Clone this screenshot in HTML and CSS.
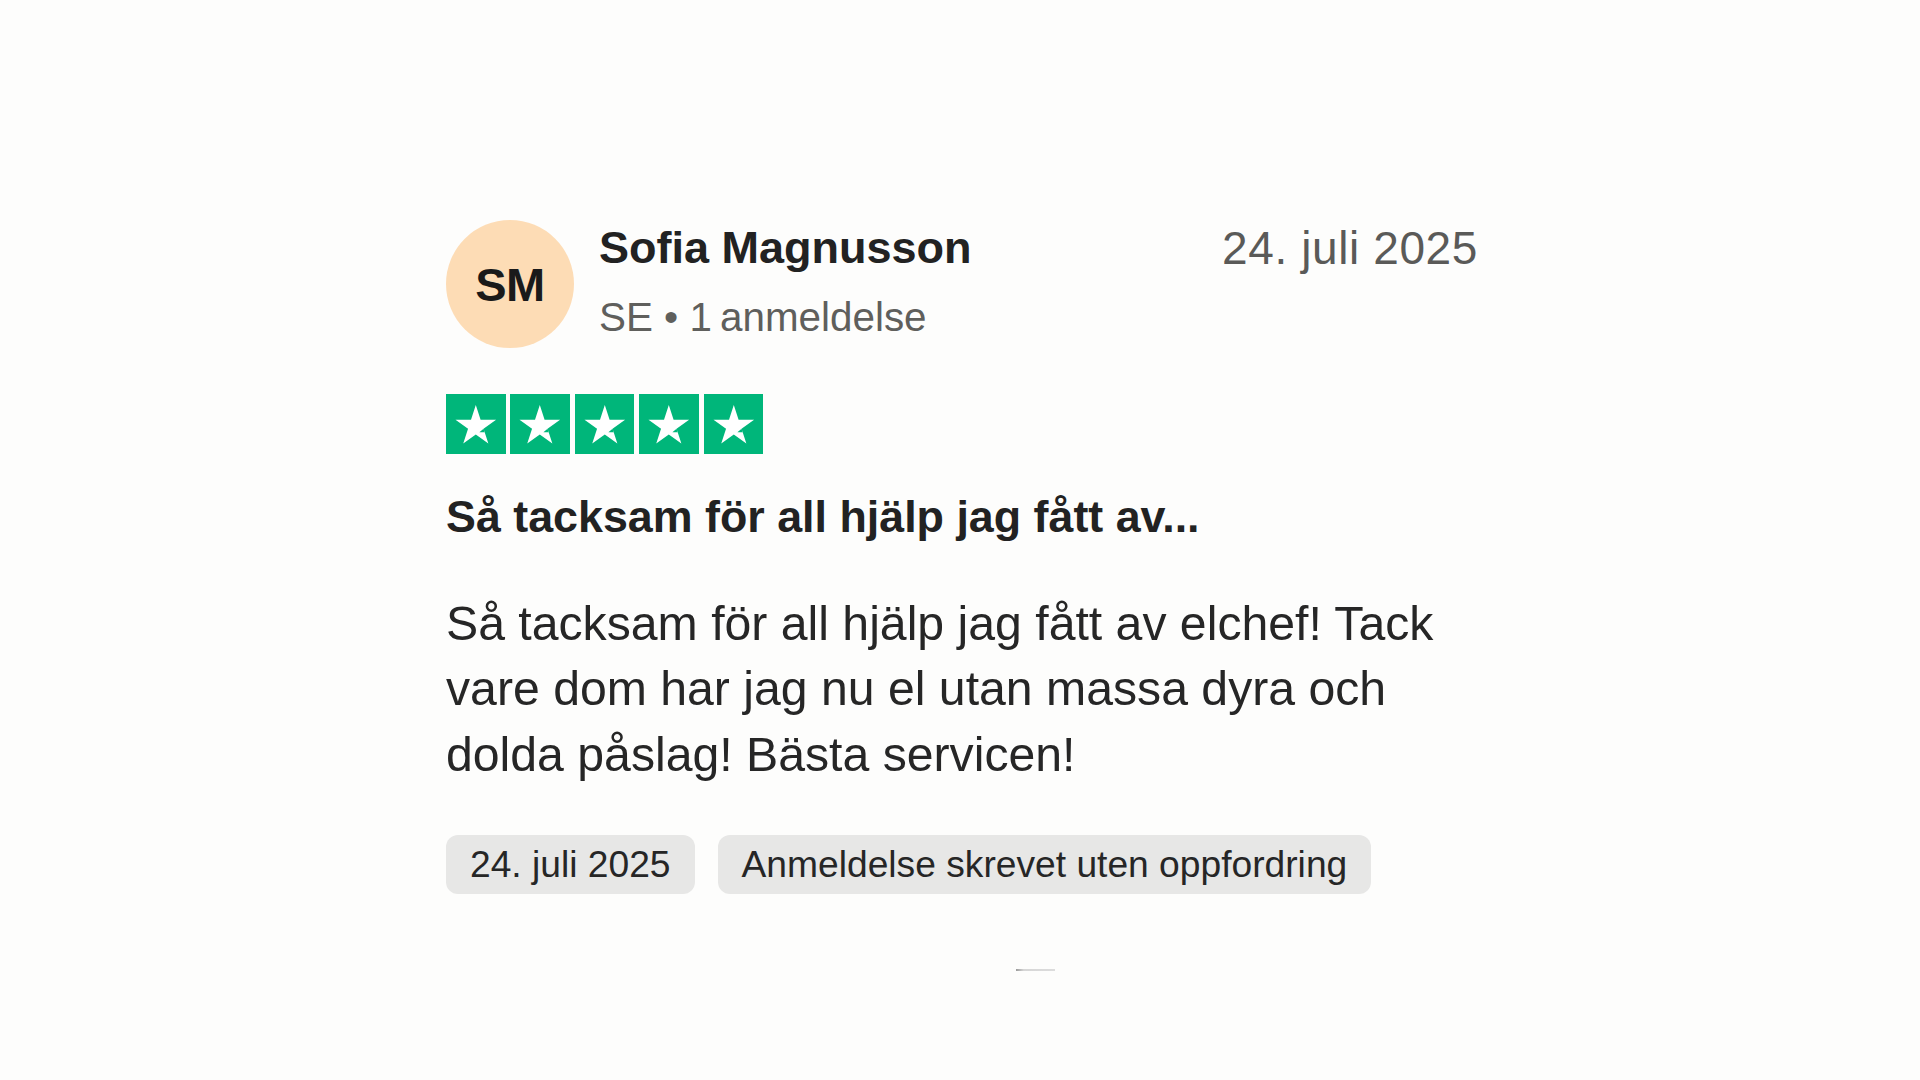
FILE: index.html
```html
<!DOCTYPE html>
<html lang="sv">
<head>
<meta charset="utf-8">
<title>Anmeldelse – Sofia Magnusson</title>
<link rel="stylesheet" href="styles.css">
</head>
<body>
<main class="page">
  <article class="review">
    <header class="review-header">
      <div class="avatar">SM</div>
      <div class="consumer">
        <div class="consumer-name">Sofia Magnusson</div>
        <div class="consumer-meta">SE • 1&#8239;anmeldelse</div>
      </div>
      <time class="review-date">24. juli 2025</time>
    </header>

    <div class="stars" aria-label="5 av 5 stjärnor">
      <span class="star"><svg viewBox="0 0 60 60"><polygon points="30,11 34.82,25.87 50.45,25.86 37.8,35.03 42.64,49.89 30,40.7 17.36,49.89 22.2,35.03 9.55,25.86 25.18,25.87" fill="#fff"/><polygon points="37.8,35.03 33.6,38.6 38.9,38.4" fill="#00b67a"/></svg></span>
      <span class="star"><svg viewBox="0 0 60 60"><polygon points="30,11 34.82,25.87 50.45,25.86 37.8,35.03 42.64,49.89 30,40.7 17.36,49.89 22.2,35.03 9.55,25.86 25.18,25.87" fill="#fff"/><polygon points="37.8,35.03 33.6,38.6 38.9,38.4" fill="#00b67a"/></svg></span>
      <span class="star"><svg viewBox="0 0 60 60"><polygon points="30,11 34.82,25.87 50.45,25.86 37.8,35.03 42.64,49.89 30,40.7 17.36,49.89 22.2,35.03 9.55,25.86 25.18,25.87" fill="#fff"/><polygon points="37.8,35.03 33.6,38.6 38.9,38.4" fill="#00b67a"/></svg></span>
      <span class="star"><svg viewBox="0 0 60 60"><polygon points="30,11 34.82,25.87 50.45,25.86 37.8,35.03 42.64,49.89 30,40.7 17.36,49.89 22.2,35.03 9.55,25.86 25.18,25.87" fill="#fff"/><polygon points="37.8,35.03 33.6,38.6 38.9,38.4" fill="#00b67a"/></svg></span>
      <span class="star"><svg viewBox="0 0 60 60"><polygon points="30,11 34.82,25.87 50.45,25.86 37.8,35.03 42.64,49.89 30,40.7 17.36,49.89 22.2,35.03 9.55,25.86 25.18,25.87" fill="#fff"/><polygon points="37.8,35.03 33.6,38.6 38.9,38.4" fill="#00b67a"/></svg></span>
    </div>

    <h2 class="review-title">Så tacksam för all hjälp jag fått av...</h2>

    <p class="review-text">Så tacksam för all hjälp jag fått av elchef! Tack vare dom har jag nu el utan massa dyra och dolda påslag! Bästa servicen!</p>

    <div class="tags">
      <span class="tag">24. juli 2025</span>
      <span class="tag">Anmeldelse skrevet uten oppfordring</span>
    </div>

    <div class="scroll-hint"></div>
  </article>
</main>
</body>
</html>
```

FILE: styles.css
```css
* { box-sizing: border-box; }

html, body {
  margin: 0;
  padding: 0;
  background: #fdfdfc;
}

body {
  font-family: "Liberation Sans", Arial, sans-serif;
  color: #1f1f1f;
}

.page {
  width: 1920px;
  height: 1080px;
  padding-top: 219px;
}

.review {
  width: 1031px;
  margin: 0 0 0 446px;
}

.review-header {
  display: flex;
  align-items: flex-start;
}

.avatar {
  width: 128px;
  height: 128px;
  margin-top: 1px;
  border-radius: 50%;
  background: #fddcb5;
  color: #1a1a1a;
  display: flex;
  align-items: center;
  justify-content: center;
  font-size: 47px;
  font-weight: 700;
  letter-spacing: -0.5px;
  flex: none;
}

.consumer {
  margin-left: 25px;
  flex: 1;
  padding-top: 2px;
}

.consumer-name {
  font-size: 45px;
  line-height: 54px;
  font-weight: 700;
  color: #222;
}

.consumer-meta {
  margin-top: 18px;
  font-size: 40.4px;
  line-height: 48px;
  color: #5f5f5c;
}

.review-date {
  font-size: 46px;
  line-height: 58px;
  letter-spacing: 0.6px;
  color: #5a5a58;
  white-space: nowrap;
  margin-right: -1px;
}

.stars {
  display: flex;
  gap: 4.8px;
  margin-top: 46px;
}

.star {
  width: 59.6px;
  height: 59.6px;
  background: #00b67a;
  display: block;
}

.star svg {
  width: 100%;
  height: 100%;
  display: block;
}

.review-title {
  margin: 33px 0 0;
  font-size: 44.8px;
  line-height: 58px;
  font-weight: 700;
  color: #222;
}

.review-text {
  margin: 46px 0 0;
  font-size: 48.2px;
  line-height: 65.5px;
  color: #262626;
}

.tags {
  display: flex;
  gap: 23px;
  margin-top: 48px;
}

.tag {
  display: inline-block;
  height: 59px;
  line-height: 59px;
  padding: 0 24px;
  background: #e7e7e6;
  border-radius: 12px;
  font-size: 37.2px;
  color: #262626;
  white-space: nowrap;
}

.scroll-hint {
  width: 39px;
  height: 2px;
  margin: 75px 0 0 570px;
  background: linear-gradient(to right, #9a9a9a 0, #d6d6d6 20%, #dcdcdc 100%);
}
```
